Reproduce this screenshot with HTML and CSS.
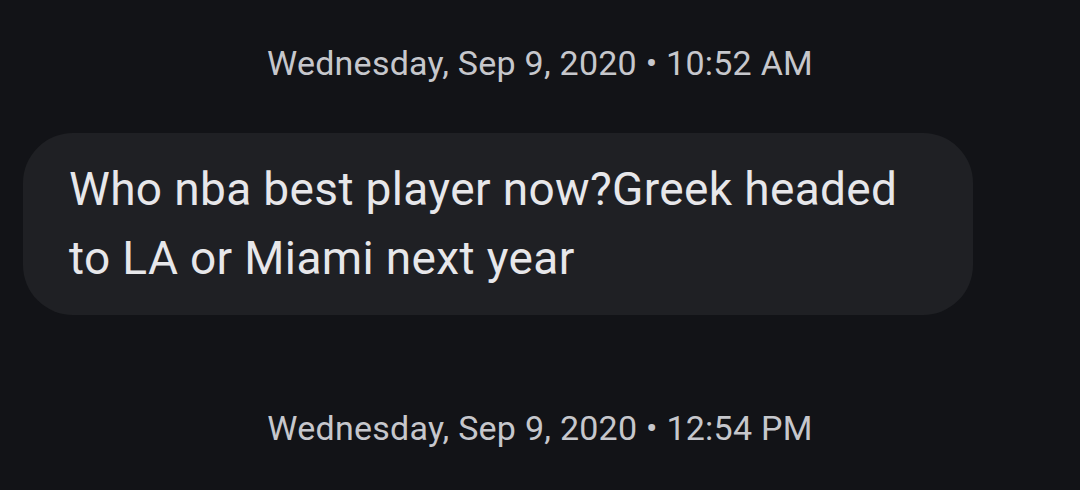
FILE: index.html
```html
<!DOCTYPE html>
<html lang="en">
<head>
<meta charset="utf-8">
<title>Messages</title>
<link rel="stylesheet" href="styles.css">
</head>
<body>
<main class="thread">
  <div class="stamp">Wednesday, Sep 9, 2020 • 10:52 AM</div>
  <div class="bubble">Who nba best player now?Greek headed to LA or Miami next year</div>
  <div class="stamp stamp-later">Wednesday, Sep 9, 2020 • 12:54 PM</div>
</main>
</body>
</html>
```

FILE: styles.css
```css
html, body {
  margin: 0;
  padding: 0;
  background: #121317;
  height: 100%;
  overflow: hidden;
}

.thread {
  display: flex;
  flex-direction: column;
  align-items: flex-start;
  padding: 43px 0 0 23px;
  font-family: Roboto, "Noto Sans", sans-serif;
}

.stamp {
  align-self: stretch;
  margin-left: -23px;
  text-align: center;
  font-size: 34px;
  line-height: 40px;
  letter-spacing: 0.25px;
  color: #c6c7cc;
}

.bubble {
  margin-top: 50px;
  box-sizing: border-box;
  width: 950px;
  padding: 22px 46px;
  border-radius: 50px;
  background: #1f2024;
  color: #e7e7ea;
  font-size: 46px;
  line-height: 69px;
  letter-spacing: 0.36px;
}

.stamp-later {
  margin-top: 93px;
}
```
